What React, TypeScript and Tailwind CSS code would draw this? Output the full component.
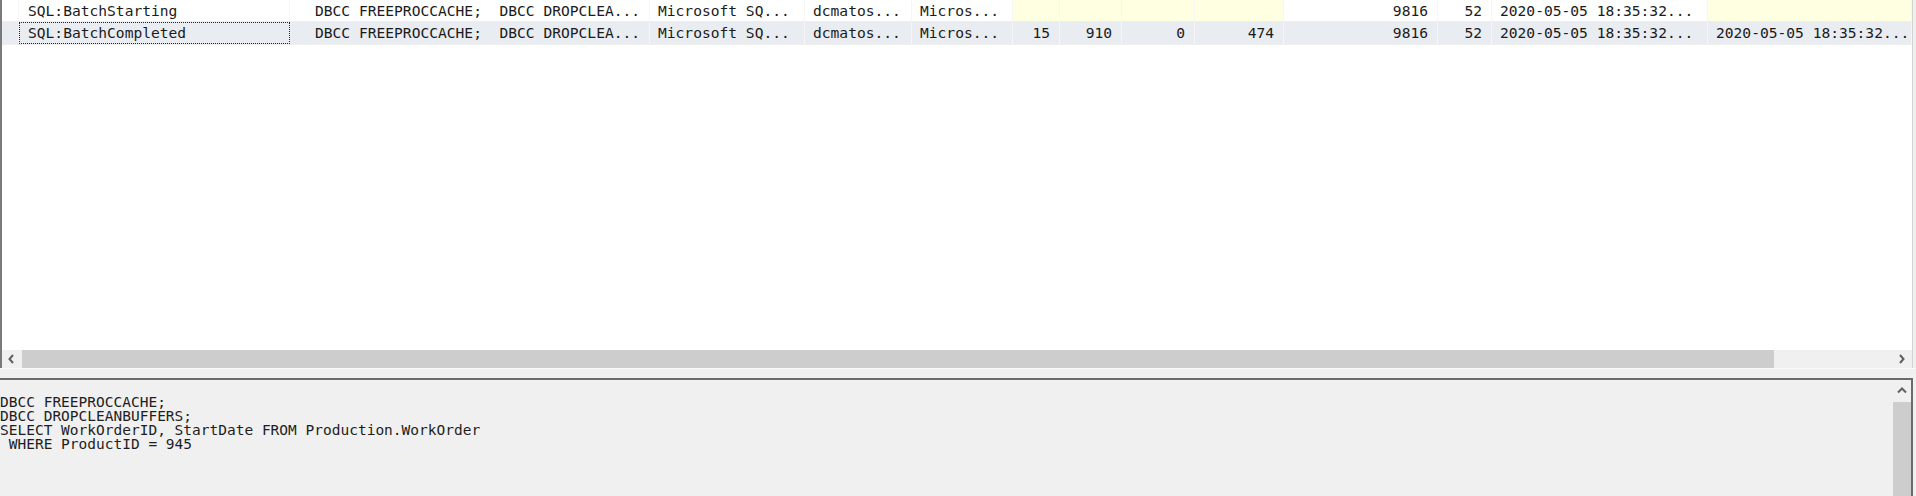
const mono = "font-['DejaVu_Sans_Mono',monospace]";

type Col = { w: string; right?: boolean; pad?: string };

const cols: Col[] = [
  { w: "w-[17px]" },
  { w: "w-[271px]", pad: "pl-[9px]" },
  { w: "w-[360px]", pad: "pl-[25px]" },
  { w: "w-[155px]" },
  { w: "w-[107px]" },
  { w: "w-[101px]" },
  { w: "w-[47px]", right: true },
  { w: "w-[62px]", right: true },
  { w: "w-[73px]", right: true },
  { w: "w-[89px]", right: true },
  { w: "w-[154px]", right: true },
  { w: "w-[54px]", right: true },
  { w: "w-[216px]" },
  { w: "flex-1" },
];

const text = "DBCC FREEPROCCACHE;  DBCC DROPCLEA...";
const start = "2020-05-05 18:35:32...";

// null means empty cell that is highlighted yellow
const rows: (string | null)[][] = [
  ["", "SQL:BatchStarting", text, "Microsoft SQ...", "dcmatos...", "Micros...", null, null, null, null, "9816", "52", start, null],
  ["", "SQL:BatchCompleted", text, "Microsoft SQ...", "dcmatos...", "Micros...", "15", "910", "0", "474", "9816", "52", start, start],
];

function Chevron({ dir }: { dir: "left" | "right" | "up" }) {
  const pts = dir === "left" ? "6,1 2.5,5 6,9" : dir === "right" ? "3,1 6.5,5 3,9" : "1,6.5 5,2.5 9,6.5";
  return (
    <svg width="10" height="10" viewBox="0 0 10 10">
      <polyline points={pts} fill="none" stroke="#606060" strokeWidth="2" />
    </svg>
  );
}

function GridRow({ cells, idx }: { cells: (string | null)[]; idx: number }) {
  const bg = idx === 1 ? "bg-[#e9edf1]" : "bg-white";
  return (
    <div className={`flex ${idx === 0 ? "h-[22px]" : "h-[23px]"} border-b border-[#eeeeee] ${bg}`}>
      {cells.map((c, i) => {
        const col = cols[i];
        const yellow = c === null ? "bg-[#ffffe1]" : "";
        const align = col.right ? "justify-end pr-[9px]" : col.pad ?? "pl-[8px]";
        const focus = idx === 1 && i === 1 ? "outline outline-1 outline-dotted outline-[#222] -outline-offset-1" : "";
        return (
          <div
            key={i}
            className={`${col.w} shrink-0 flex items-center whitespace-pre overflow-hidden border-r border-[#f6f6f6] ${yellow} ${align} ${focus}`}
          >
            {c}
          </div>
        );
      })}
    </div>
  );
}

export default function App() {
  return (
    <div className="w-[1916px] h-[496px] bg-[#f0f0f0] flex flex-col overflow-hidden">
      <div className="h-[368px] w-[1913px] flex flex-col border-l-2 border-r border-l-[#7a7a7a] border-r-[#d2d2d2]">
        <div className={`flex-1 bg-white text-[14.6px] text-[#1b1b1b] ${mono}`}>
          {rows.map((r, i) => (
            <GridRow key={i} cells={r} idx={i} />
          ))}
        </div>
        <div className="h-[18px] flex bg-[#f0f0f0]">
          <div className="w-[20px] flex items-center justify-center">
            <Chevron dir="left" />
          </div>
          <div className="w-[1752px] bg-[#cdcdcd]" />
          <div className="flex-1" />
          <div className="w-[20px] flex items-center justify-center">
            <Chevron dir="right" />
          </div>
        </div>
      </div>
      <div className="h-[10px] border-t border-[#fafafa]" />
      <div className="flex-1 flex w-[1913px] border-t-2 border-r-2 border-[#6b6b6b] min-h-0">
        <pre className={`flex-1 pt-[15px] text-[14.5px] leading-[14px] text-[#1e1e1e] ${mono}`}>
          {"DBCC FREEPROCCACHE;\nDBCC DROPCLEANBUFFERS;\nSELECT WorkOrderID, StartDate FROM Production.WorkOrder\n WHERE ProductID = 945"}
        </pre>
        <div className="w-[19px] flex flex-col">
          <div className="h-[22px] flex items-center justify-center">
            <Chevron dir="up" />
          </div>
          <div className="flex-1 ml-[1px] bg-[#cdcdcd]" />
        </div>
      </div>
    </div>
  );
}
